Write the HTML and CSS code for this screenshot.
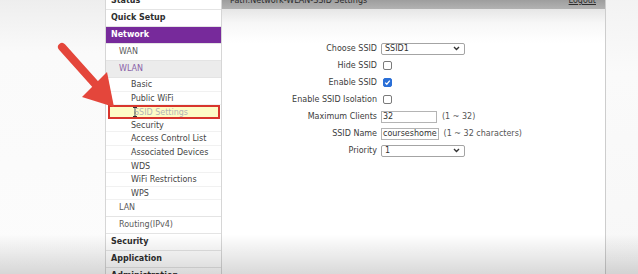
FILE: index.html
```html
<!DOCTYPE html>
<html lang="en">

<head>
    <meta charset="UTF-8">
    <meta name="viewport" content="width=device-width, initial-scale=1.0">
    <title>SSID Settings</title>
    <link rel="stylesheet" href="styles.css">
</head>

<body>

    <div class="page">
        <div class="gutter"></div>

        <nav class="menu">
            <div class="menu-item top">Status</div>
            <div class="menu-item top">Quick Setup</div>
            <div class="menu-item top active">Network</div>
            <div class="menu-item sub">WAN</div>
            <div class="menu-item sub open">WLAN</div>
            <div class="menu-item leaf">Basic</div>
            <div class="menu-item leaf">Public WiFi</div>
            <div class="menu-item leaf current">
                <svg class="ibeam" width="4" height="10" viewBox="0 0 4 10">
                    <path d="M0 0.5h4M0 9.5h4M2 0.5v9" stroke="#333" stroke-width="1" fill="none" />
                </svg>SSID Settings
            </div>
            <div class="menu-item leaf">Security</div>
            <div class="menu-item leaf">Access Control List</div>
            <div class="menu-item leaf">Associated Devices</div>
            <div class="menu-item leaf">WDS</div>
            <div class="menu-item leaf">WiFi Restrictions</div>
            <div class="menu-item leaf">WPS</div>
            <div class="menu-item sub">LAN</div>
            <div class="menu-item sub">Routing(IPv4)</div>
            <div class="menu-item top">Security</div>
            <div class="menu-item top">Application</div>
            <div class="menu-item top">Administration</div>
        </nav>

        <main class="content">
            <div class="path-bar">
                <span>Path:Network-WLAN-SSID Settings</span>
                <a class="logout">Logout</a>
            </div>

            <div class="form">
                <label>Choose SSID</label>
                <div class="field">
                    <div class="select">SSID1
                        <svg class="chev" width="7" height="5" viewBox="0 0 7 5">
                            <path d="M1 1l2.5 2.5L6 1" stroke="#333" stroke-width="1.4" fill="none" />
                        </svg>
                    </div>
                </div>

                <label>Hide SSID</label>
                <div class="field"><span class="check"></span></div>

                <label>Enable SSID</label>
                <div class="field">
                    <span class="check checked">
                        <svg width="7" height="7" viewBox="0 0 7 7">
                            <path d="M1.2 3.6l1.6 1.6 3-3.6" stroke="#fff" stroke-width="1.3" fill="none" />
                        </svg>
                    </span>
                </div>

                <label>Enable SSID Isolation</label>
                <div class="field"><span class="check"></span></div>

                <label>Maximum Clients</label>
                <div class="field"><span class="input">32</span><span class="hint">(1 ~ 32)</span></div>

                <label>SSID Name</label>
                <div class="field"><span class="input">courseshome</span><span class="hint">(1 ~ 32 characters)</span></div>

                <label>Priority</label>
                <div class="field">
                    <div class="select">1
                        <svg class="chev" width="7" height="5" viewBox="0 0 7 5">
                            <path d="M1 1l2.5 2.5L6 1" stroke="#333" stroke-width="1.4" fill="none" />
                        </svg>
                    </div>
                </div>
            </div>
        </main>

        <div class="gutter-right"></div>
    </div>

    <!-- annotation drawn over the video frame -->
    <svg class="arrow" width="638" height="274" viewBox="0 0 638 274">
        <line x1="62" y1="47" x2="96" y2="85" stroke="#e4463b" stroke-width="8" stroke-linecap="round" />
        <polygon points="82,97 107,72 114,107" fill="#e4463b" />
    </svg>
    <div class="video-shade"></div>

</body>

</html>
```

FILE: styles.css
```css
html,
body {
    margin: 0;
    width: 638px;
    height: 274px;
    overflow: hidden;
}

body {
    position: relative;
    background: #f6f6f6;
    font-family: "DejaVu Sans", sans-serif;
    font-size: 8px;
    color: #3a3a3a;
}

.page {
    display: flex;
    margin-top: -7px;
    height: 281px;
}

.gutter {
    width: 105px;
    flex: none;
    background: linear-gradient(#ececec, #fafafa 60px, #fcfcfc);
}

.menu {
    width: 117px;
    flex: none;
    box-sizing: border-box;
    background: #fff;
    border-left: 1px solid #d6d6d6;
    border-right: 1px solid #d6d6d6;
}

.menu-item {
    box-sizing: border-box;
    height: 17px;
    line-height: 16px;
    border-bottom: 1px solid #e4e4e4;
    white-space: nowrap;
}

.menu-item.top {
    padding-left: 5px;
    font-weight: bold;
    color: #2e2e2e;
}

.menu-item.active {
    background: #772a9b;
    color: #fff;
}

.menu-item.sub {
    padding-left: 13px;
    color: #5a5a5a;
}

.menu-item.open {
    background: #ececec;
    color: #8a62a8;
}

.menu-item.leaf {
    height: 13.6px;
    line-height: 13px;
    padding-left: 25px;
    color: #444;
    border-bottom-color: #f1f1f1;
}

.menu-item.current {
    margin: 0 1px 0 2px;
    padding-left: 23px;
    background: #fdfcc6;
    border: 2px solid #d8352c;
    line-height: 10px;
    color: #b4b4b4;
}

.ibeam {
    vertical-align: -2px;
    margin-right: -3px;
}

.content {
    width: 384px;
    flex: none;
    box-sizing: border-box;
    border-right: 1px solid #cdcdcd;
    background: linear-gradient(#e6e6e6 16px, #f7f7f7 30px, #fff 50px);
}

.path-bar {
    display: flex;
    justify-content: space-between;
    height: 16px;
    line-height: 16px;
    padding: 0 9px 0 8px;
    background: linear-gradient(#8e8e8e, #b2b2b2);
    color: #2c2c2c;
}

.logout {
    text-decoration: underline;
}

.form {
    display: grid;
    grid-template-columns: 95px auto;
    grid-auto-rows: 17px;
    column-gap: 4px;
    align-items: center;
    padding: 31px 0 0 60px;
}

.form label {
    text-align: right;
    color: #3c3c3c;
    white-space: nowrap;
}

.field {
    display: flex;
    align-items: center;
    white-space: nowrap;
}

.select {
    display: flex;
    justify-content: space-between;
    align-items: center;
    box-sizing: border-box;
    width: 84px;
    height: 12px;
    padding: 0 4px 0 3px;
    border: 1px solid #a4a4a4;
    border-radius: 2px;
    background: #fff;
    color: #333;
}

.check {
    display: inline-flex;
    justify-content: center;
    align-items: center;
    box-sizing: border-box;
    width: 9px;
    height: 9px;
    margin-left: 2px;
    border: 1px solid #7a7a7a;
    border-radius: 2px;
    background: #fff;
}

.check.checked {
    background: #2a6fd7;
    border-color: #2a6fd7;
}

.input {
    box-sizing: border-box;
    min-width: 56px;
    height: 12px;
    line-height: 10px;
    padding: 0 1px;
    border: 1px solid #b4b4b4;
    background: #fff;
    color: #333;
}

.hint {
    margin-left: 5px;
    color: #555;
}

.gutter-right {
    flex: 1;
    background: linear-gradient(#f2f2f2, #fafafa 80px, #f7f7f7);
}

.arrow {
    position: absolute;
    left: 0;
    top: 0;
    pointer-events: none;
}

.video-shade {
    position: absolute;
    left: 0;
    right: 0;
    bottom: 0;
    height: 40px;
    background: linear-gradient(rgba(0, 0, 0, 0), rgba(0, 0, 0, 0.15));
    pointer-events: none;
}
```
